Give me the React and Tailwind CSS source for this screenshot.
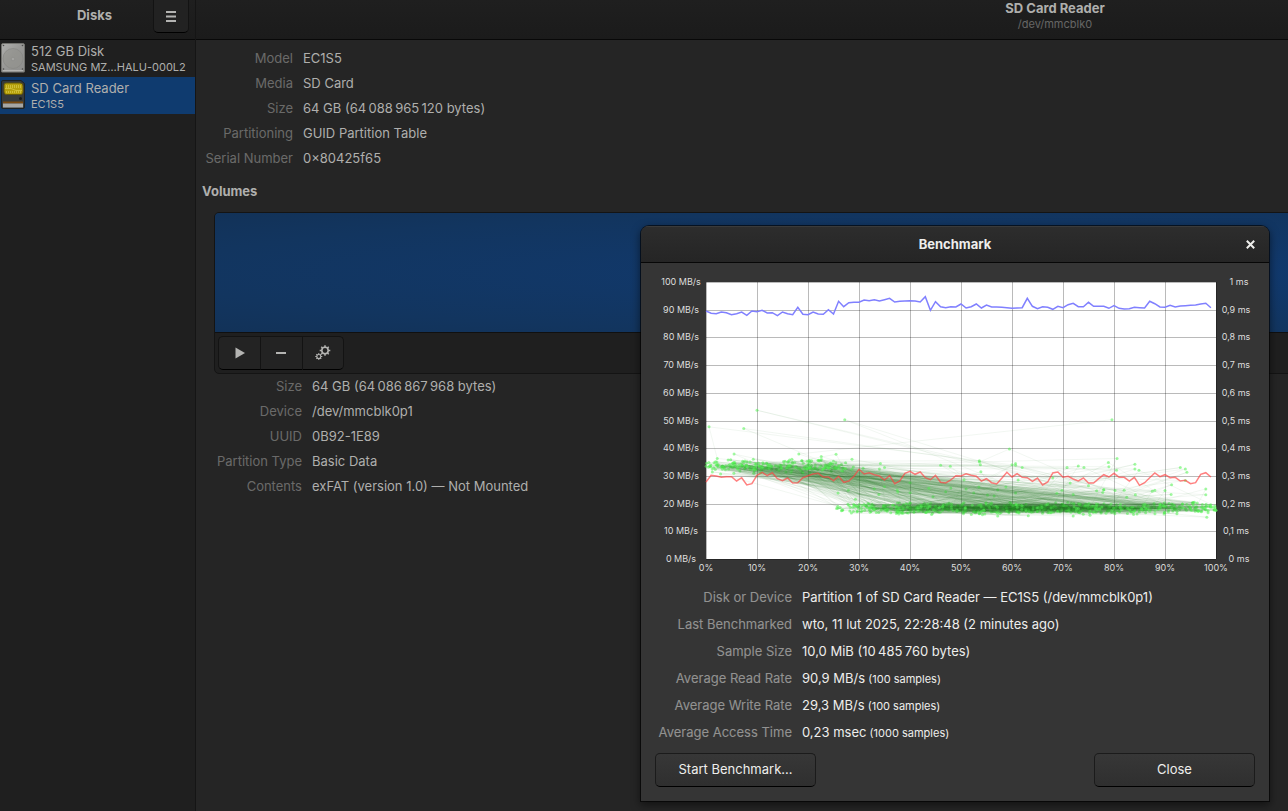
import React from "react";

const READ = [273,280,281,276,278,284,281,276,286,273,275,271,279,278,287,276,281,284,262,283,284,276,282,283,269,282,244,260,248,247,247,240,242,239,243,239,235,246,244,243,242,243,246,230,271,245,260,263,260,261,252,264,260,252,264,255,261,261,262,263,265,264,263,235,259,266,260,262,268,259,263,254,250,260,260,247,259,259,259,265,257,265,267,266,262,263,264,244,251,261,262,256,261,258,257,256,255,252,250,263];
const WRITE = [246,226,228,232,230,230,243,233,255,251,226,217,227,218,236,242,234,249,248,233,227,222,220,231,231,242,229,247,243,229,208,222,218,224,228,240,227,251,243,220,214,223,216,233,239,226,247,249,240,227,228,221,226,229,243,236,248,252,235,217,231,221,232,233,244,234,255,246,219,216,232,229,237,243,234,249,249,236,224,231,220,232,232,243,232,256,248,233,219,230,224,233,232,243,241,251,248,223,218,231];

const LEFT = 51;
const TOP = 10;
const W = 510;
const H = 277;
const px = (percent) => LEFT + (percent * W) / 100;
const py = (ms) => TOP + (1 - ms) * H;

const readPoints = READ.map((v, i) => `${px(i).toFixed(1)},${(v / 3 - 52).toFixed(1)}`).join(" ");
const writePoints = WRITE.map((v, i) => `${px(i).toFixed(1)},${(v / 3 + 128).toFixed(1)}`).join(" ");

const SLOW = [
  [53.6, 0.355], [53.8, 0.34], [53.9, 0.315], [60.7, 0.345], [60.7, 0.338], [70.8, 0.33], [73, 0.336], [74.1, 0.33],
  [78.9, 0.348], [79, 0.333], [80.6, 0.363], [80.5, 0.32], [84.1, 0.342], [84.1, 0.325], [84.9, 0.32], [93, 0.33],
  [94, 0.325], [94.3, 0.313], [46, 0.338], [47.9, 0.335], [34.2, 0.345], [30.8, 0.328], [34, 0.325], [35, 0.33],
  [68, 0.292], [71.4, 0.274], [61.2, 0.285], [98, 0.253], [98, 0.232], [91.3, 0.268], [87.5, 0.245], [88, 0.248],
  [82, 0.248], [82.5, 0.223], [78, 0.25], [76.6, 0.246], [75, 0.264], [77.8, 0.24], [80.2, 0.247], [60.7, 0.238],
  [57.2, 0.25], [58.8, 0.26], [56.5, 0.227], [55.2, 0.231], [53.5, 0.26], [52.5, 0.238], [51, 0.253], [72, 0.233],
  [44.5, 0.225], [47, 0.243], [48, 0.256], [25.9, 0.238], [27.9, 0.248], [33, 0.254], [33.9, 0.233], [40, 0.239],
  [40, 0.275], [35, 0.261], [37.5, 0.249], [29.3, 0.216], [57.2, 0.155], [63.2, 0.156], [72, 0.155], [75.3, 0.158],
  [98.2, 0.151], [90, 0.247], [94, 0.283], [84.2, 0.232], [91.2, 0.233], [68.8, 0.237], [69.8, 0.248],
  [5.5, 0.379], [25.5, 0.378], [22.6, 0.37], [16.4, 0.357], [43.7, 0.255], [50.6, 0.286], [37.6, 0.242],
];

const SPIKES = {
  90: [[92, 0.18], [10, 0.537], [88, 0.185]],
  240: [[70, 0.19], [27.2, 0.503], [84, 0.18]],
  390: [[2.2, 0.363], [0.6, 0.477], [60, 0.34]],
  520: [[45, 0.18], [7.4, 0.471], [62, 0.33]],
  700: [[53.6, 0.35], [59.5, 0.397], [78, 0.25]],
};

function buildSamples() {
  let seed = 20250211;
  const rnd = () => {
    seed = (seed * 1664525 + 1013904223) % 4294967296;
    return seed / 4294967296;
  };
  const list = [];
  for (let i = 0; i < 900; i++) {
    if (SPIKES[i]) list.push(...SPIKES[i]);
    if (i % 11 === 5 && SLOW[(i - 5) / 11]) {
      list.push(SLOW[(i - 5) / 11]);
    }
    const x = rnd() * 100;
    const spread = (rnd() + rnd()) / 2 - 0.5;
    const high = x < 25.5 || (x < 29 && rnd() < 0.5);
    list.push([x, high ? 0.334 + spread * 0.056 : 0.183 + spread * 0.048]);
  }
  list.push([18.2, 0.379], [79.6, 0.503]);
  return list;
}

const SAMPLES = buildSamples();
const TICKS = [0, 1, 2, 3, 4, 5, 6, 7, 8, 9, 10];

function Chart() {
  return (
    <svg viewBox="0 0 600 306" className="block h-auto w-full font-[Inter,sans-serif]" role="img" aria-label="Benchmark graph">
      <rect x={LEFT} y={TOP} width={W} height={H} fill="#fff" />
      {TICKS.map((t) => (
        <g key={t} stroke="#000" strokeOpacity="0.27" strokeWidth="1" shapeRendering="crispEdges">
          <line x1={LEFT} x2={LEFT + W} y1={Math.round(TOP + (t * H) / 10) + 0.5} y2={Math.round(TOP + (t * H) / 10) + 0.5} />
          <line y1={TOP} y2={TOP + H} x1={px(t * 10) + 0.5} x2={px(t * 10) + 0.5} />
        </g>
      ))}
      <g stroke="#2f7f2f" strokeOpacity="0.13" strokeWidth="0.5" fill="#55f555" fillOpacity="0.55">
        {SAMPLES.map(([x, y], i) => (
          <React.Fragment key={i}>
            {i > 0 && <line x1={px(SAMPLES[i - 1][0])} y1={py(SAMPLES[i - 1][1])} x2={px(x)} y2={py(y)} />}
            <circle cx={px(x)} cy={py(y)} r="1.5" stroke="none" />
          </React.Fragment>
        ))}
      </g>
      <polyline points={readPoints} fill="none" stroke="#8080ff" strokeWidth="1.5" />
      <polyline points={writePoints} fill="none" stroke="#ff4040" strokeOpacity="0.66" strokeWidth="1.5" />
      <g fill="#dededd" fontSize="9" textAnchor="middle">
        {TICKS.map((t) => (
          <g key={t}>
            <text x="26" y={Math.round(13 + (t * H) / 10)}>{`${100 - t * 10} MB/s`}</text>
            <text x={t % 10 ? 581 : 584} y={Math.round(13 + (t * H) / 10)}>
              {t === 0 ? "1 ms" : t === 10 ? "0 ms" : `0,${10 - t} ms`}
            </text>
            <text x={px(t * 10)} y="299">{`${t * 10}%`}</text>
          </g>
        ))}
      </g>
    </svg>
  );
}

function DiskIcon() {
  return (
    <svg width="26" height="32" viewBox="0 1 26 32" aria-hidden="true">
      <defs>
        <linearGradient id="disk-face" x1="0" y1="0" x2="1" y2="1">
          <stop offset="0" stopColor="#b0b0ae" />
          <stop offset="0.45" stopColor="#989896" />
          <stop offset="1" stopColor="#8e8e8c" />
        </linearGradient>
      </defs>
      <rect x="1.5" y="1.5" width="23" height="29" rx="1.5" fill="url(#disk-face)" stroke="#73736f" />
      <circle cx="13" cy="16.5" r="10" fill="#92928e" fillOpacity="0.6" stroke="#858582" strokeWidth="0.6" />
      <circle cx="13" cy="17" r="1.8" fill="#a3a3a0" stroke="#898986" strokeWidth="0.6" />
      <path d="M3 28.5h20" stroke="#b4b4b2" />
      <path d="M2 30.5h22" stroke="#4f4f4d" />
      <g fill="#4c4c4a">
        <circle cx="3.5" cy="3.5" r="0.8" /><circle cx="22.5" cy="3.5" r="0.8" />
        <circle cx="3.5" cy="27" r="0.8" /><circle cx="22.5" cy="27" r="0.8" />
      </g>
    </svg>
  );
}

function CardIcon() {
  return (
    <svg width="26" height="32" viewBox="0 1 26 32" aria-hidden="true">
      <path d="M3 1.500h18l3.500 3v23.500q0 1.500-1.500 1.500h-20q-1.500 0-1.500-1.500v-25q0-1.500 1.500-1.500z" fill="#363a3b" stroke="#1e2222" />
      <path d="M6 4h14q3 0 3 3v6q0 2.500-2.500 2.500h-14q-2.500 0-2.500-2.500v-7q0-2 2-2z" fill="#b5a00c" stroke="#62570a" />
      <path d="M6.500 6v3m2-3v3m2-3v3m2-3v3m2-3v3m2-3v3m2-3v3m2-3v3M6.500 12v2m2-2v2m2-2v2m2-2v2m2-2v2m2-2v2m2-2v2m2-2v2" stroke="#d8cb4c" strokeWidth="0.7" />
      <path d="M5 9.500h6l5 2h6" stroke="#d8cb4c" strokeWidth="0.7" fill="none" />
      <circle cx="20.5" cy="19.500" r="1.500" fill="#171a1b" />
      <path d="M3 22.500h20v2h-20z" fill="#7a4a10" />
      <path d="M3 24.500h20v4h-20z" fill="#a6a6a4" />
    </svg>
  );
}

function Gears() {
  const teeth = [0, 45, 90, 135, 180, 225, 270, 315];
  return (
    <svg width="16" height="16" viewBox="0 0 16 16" aria-hidden="true" fill="none" stroke="#b4b4b2">
      <g transform="translate(10 5.5)">
        <circle r="3.200" strokeWidth="1.600" />
        {teeth.map((a) => <path key={a} d="M0-3.500V-5.300" strokeWidth="1.500" transform={`rotate(${a})`} />)}
      </g>
      <g transform="translate(3.8 11.5)">
        <circle r="2" strokeWidth="1.100" />
        {teeth.map((a) => <path key={a} d="M0-2V-3.500" strokeWidth="1" transform={`rotate(${a})`} />)}
      </g>
    </svg>
  );
}

function Details({ rows, className }) {
  return (
    <dl className={`grid w-max gap-x-2.5 ${className}`}>
      {rows.map(([label, value, note]) => (
        <React.Fragment key={label}>
          <dt className="text-right opacity-50">{label}</dt>
          <dd>{value}{note && <span className="text-[11px] leading-none"> {note}</span>}</dd>
        </React.Fragment>
      ))}
    </dl>
  );
}

const DEVICE = [
  ["Model", "EC1S5"],
  ["Media", "SD Card"],
  ["Size", "64 GB (64\u2009088\u2009965\u2009120 bytes)"],
  ["Partitioning", "GUID Partition Table"],
  ["Serial Number", "0×80425f65"],
];
const VOLUME = [
  ["Size", "64 GB (64\u2009086\u2009867\u2009968 bytes)"],
  ["Device", "/dev/mmcblk0p1"],
  ["UUID", "0B92-1E89"],
  ["Partition Type", "Basic Data"],
  ["Contents", "exFAT (version 1.0) — Not Mounted"],
];
const RESULTS = [
  ["Disk or Device", "Partition 1 of SD Card Reader — EC1S5 (/dev/mmcblk0p1)"],
  ["Last Benchmarked", "wto, 11 lut 2025, 22:28:48 (2 minutes ago)"],
  ["Sample Size", "10,0 MiB (10\u2009485\u2009760 bytes)"],
  ["Average Read Rate", "90,9 MB/s", "(100 samples)"],
  ["Average Write Rate", "29,3 MB/s", "(100 samples)"],
  ["Average Access Time", "0,23 msec", "(1000 samples)"],
];

const dialogButton = "h-[34px] w-[161px] rounded-[5px] border border-[#1b1b1b] border-b-black bg-linear-to-b from-[#373737] to-[#2f2f2f] pb-0.5";

export default function App() {
  return (
    <div className="relative flex h-screen overflow-hidden bg-[#252525] font-[Inter,sans-serif] text-[13px] leading-[17px] text-[#afafad]">
      <aside className="flex w-[196px] shrink-0 flex-col border-r border-[#151515] bg-[#1f1f1f]">
        <header className="flex h-10 items-start border-b border-[#080808] bg-linear-to-b from-[#1f1f1f] to-[#1b1b1b] pr-1.5">
          <h1 className="flex-1 pt-[7px] pl-9 text-center font-bold">Disks</h1>
          <button aria-label="Menu" className="flex h-[33px] w-9 items-center justify-center rounded-b-[5px] border border-t-0 border-[#131313] border-b-black bg-[#222222]">
            <svg width="10" height="11" viewBox="0 0 10 11" stroke="#b4b4b2" strokeWidth="2" aria-hidden="true"><path d="M0 1h10M0 5.500h10M0 10h10" /></svg>
          </button>
        </header>
        <nav>
          <a href="#disk" className="flex h-[37px] items-center gap-[5px]">
            <DiskIcon />
            <span><span className="block">512 GB Disk</span><span className="block text-[11px] leading-[15px]">SAMSUNG MZ…HALU-000L2</span></span>
          </a>
          <a href="#card" className="flex h-[37px] items-center gap-[5px] bg-[#0f3b6f]">
            <CardIcon />
            <span><span className="block">SD Card Reader</span><span className="block text-[11px] leading-[15px]">EC1S5</span></span>
          </a>
        </nav>
      </aside>

      <main className="min-w-[1718px] flex-1">
        <header className="h-10 border-b border-[#080808] bg-linear-to-b from-[#1f1f1f] to-[#1b1b1b] text-center">
          <h2 className="font-bold">SD Card Reader</h2>
          <p className="text-[11px] leading-[15px] opacity-50">/dev/mmcblk0</p>
        </header>
        <div className="px-1.5 pt-2.5">
          <Details rows={DEVICE} className="grid-cols-[91px_auto] gap-y-2" />
          <h3 className="mt-4 font-bold">Volumes</h3>
          <section className="mx-3 mt-3 rounded-[5px] border border-[#141414] bg-[#1f1f1f]">
            <div className="h-[120px] rounded-t-[4px] border-b border-[#101010] bg-[radial-gradient(ellipse_at_center,#113a70_0%,#12355f_75%,#123258_100%)]" />
            <div className="flex p-[3px]">
              <button aria-label="Mount" className="flex h-[34px] w-[42px] items-center justify-center rounded-l-[5px] border border-r-0 border-[#131313] border-b-black bg-[#232323]">
                <svg width="10" height="12" viewBox="0 0 10 12" fill="#b4b4b2" aria-hidden="true"><path d="M0.500 0.500v11l9.500-5.500z" /></svg>
              </button>
              <button aria-label="Delete" className="flex h-[34px] w-[42px] items-center justify-center border border-r-0 border-[#131313] border-b-black bg-[#232323]">
                <svg width="11" height="2" viewBox="0 0 11 2" fill="#b4b4b2" aria-hidden="true"><path d="M0 0h10v2H0z" /></svg>
              </button>
              <button aria-label="More actions" className="flex h-[34px] w-[42px] items-center justify-center rounded-r-[5px] border border-[#131313] border-b-black bg-[#232323]">
                <Gears />
              </button>
            </div>
          </section>
          <Details rows={VOLUME} className="mt-1 ml-3 grid-cols-[88px_auto] gap-y-2" />
        </div>
      </main>

      <section role="dialog" aria-labelledby="dlg" className="absolute top-[226px] left-[641px] w-[628px] overflow-hidden rounded-t-[8px] bg-[#353535] text-[#eeeeec] shadow-[0_3px_9px_1px_rgba(0,0,0,0.5),0_0_0_1px_rgba(0,0,0,0.6)]">
        <header className="relative flex h-[37px] items-center justify-center border-b border-[#070707] bg-linear-to-b from-[#2d2d2d] to-[#252525] shadow-[inset_0_1px_#3a3a3a]">
          <h2 id="dlg" className="font-bold">Benchmark</h2>
          <button aria-label="Close dialog" className="absolute right-3.5 p-0">
            <svg width="9" height="9" viewBox="0 0 9 9" stroke="#eeeeec" strokeWidth="2" aria-hidden="true"><path d="M0.800 0.800l7.400 7.400M8.200 0.800L0.800 8.200" /></svg>
          </button>
        </header>
        <div className="px-3.5 pt-[9px] pb-3.5">
          <Chart />
          <Details rows={RESULTS} className="mt-[11px] grid-cols-[137px_auto] gap-y-2.5" />
          <footer className="mt-3 flex justify-between">
            <button className={dialogButton}>Start Benchmark…</button>
            <button className={dialogButton}>Close</button>
          </footer>
        </div>
      </section>
    </div>
  );
}
